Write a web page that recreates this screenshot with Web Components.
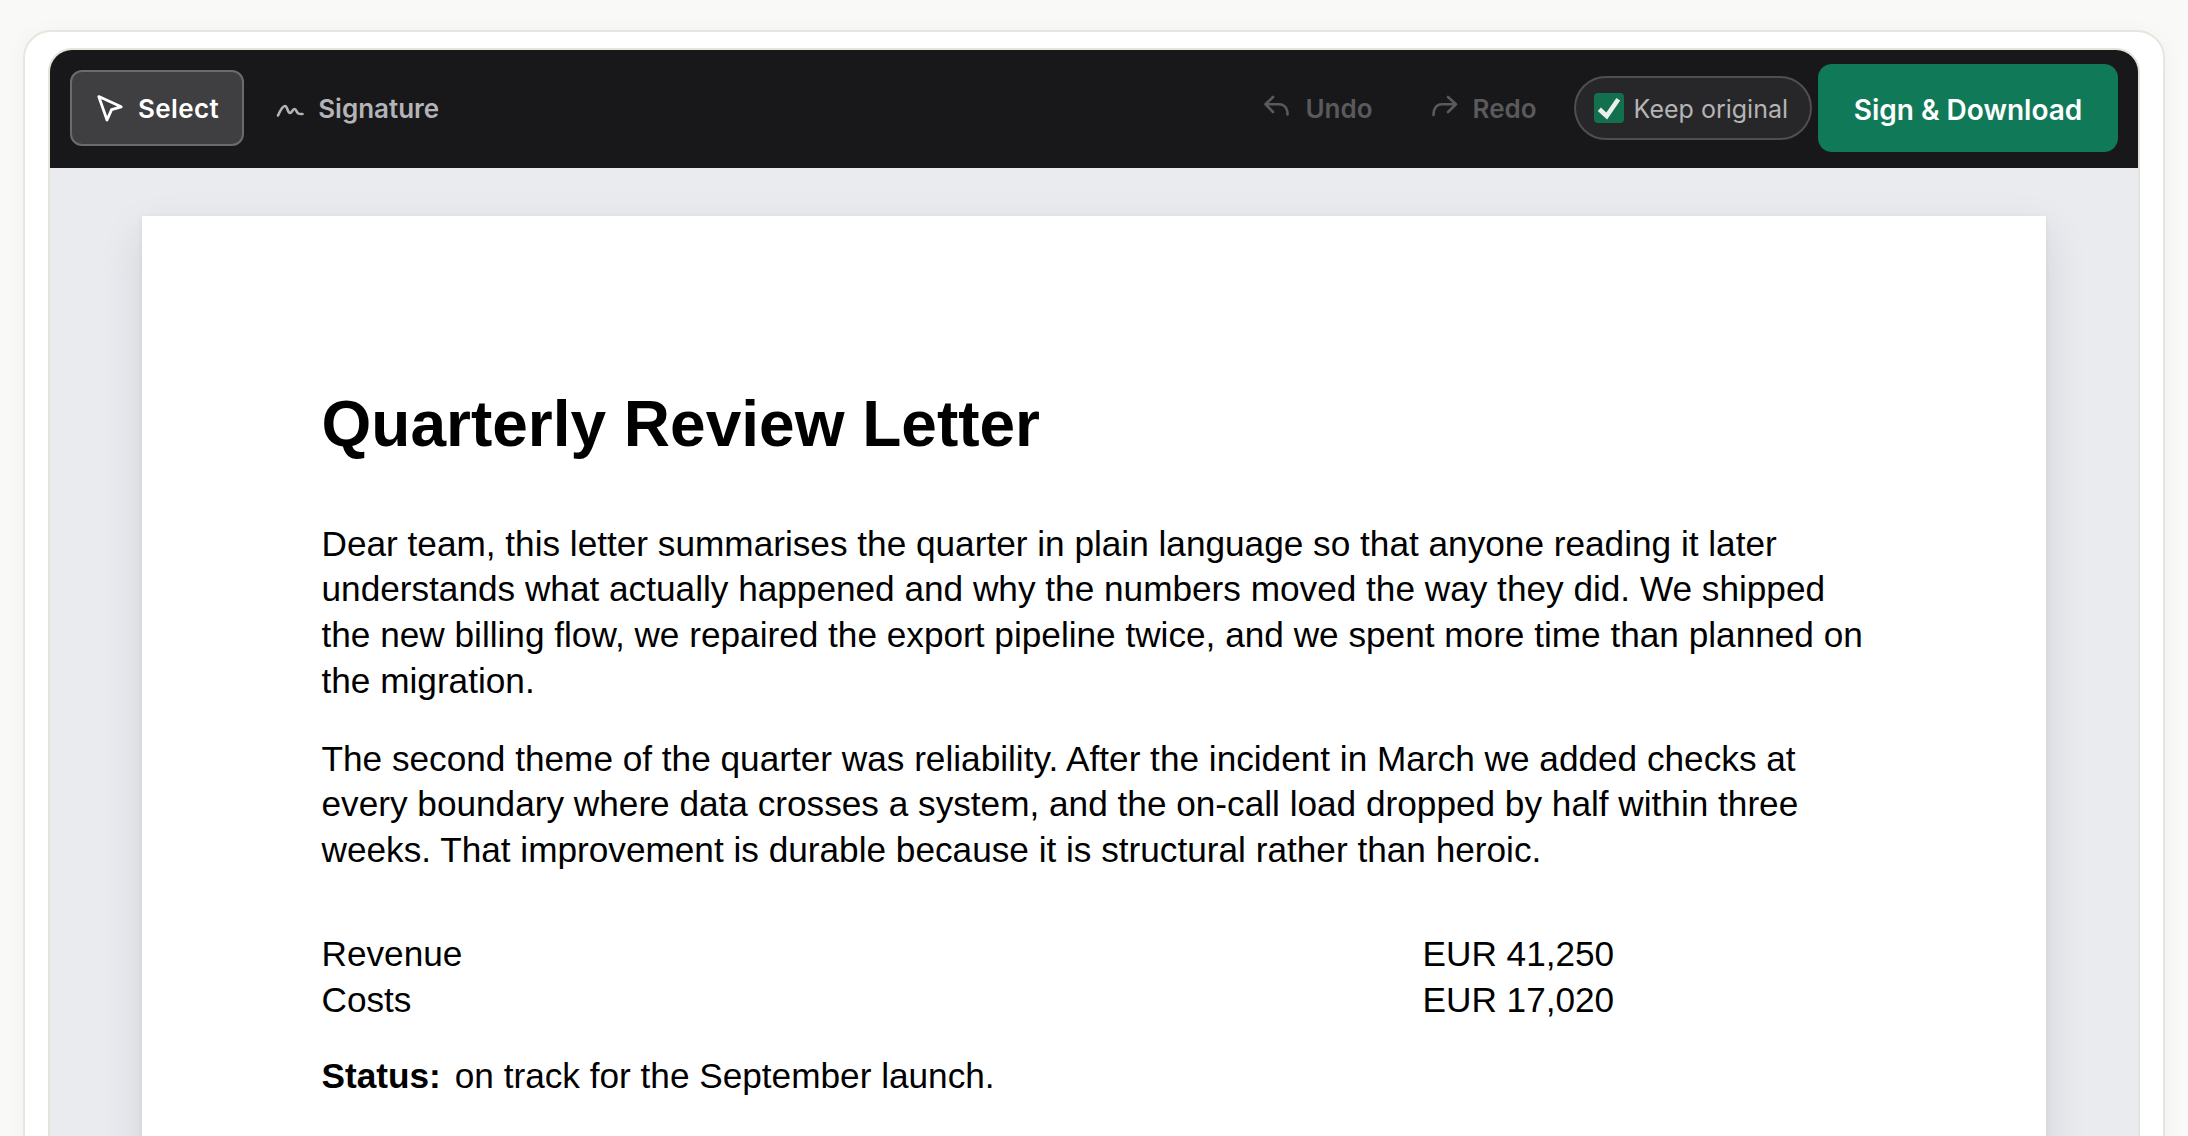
<!DOCTYPE html>
<html><head><meta charset="utf-8">
<style>
html,body{margin:0;padding:0;height:1136px;overflow:hidden;background:#f9f9f7}
</style></head><body>
<app-frame>
  <tool-bar>
    <tool-btn slot="left" active label="Select" icon="select"></tool-btn>
    <tool-btn slot="left" label="Signature" icon="sign"></tool-btn>
    <tool-btn slot="right" disabled label="Undo" icon="undo"></tool-btn>
    <tool-btn slot="right" disabled label="Redo" icon="redo"></tool-btn>
    <keep-toggle slot="right">Keep original</keep-toggle>
    <primary-btn slot="right">Sign &amp; Download</primary-btn>
  </tool-bar>
  <doc-canvas>
    <doc-page>
      <h1 slot="title">Quarterly Review Letter</h1>
      <doc-para>Dear team, this letter summarises the quarter in plain language so that anyone reading it later understands what actually happened and why the numbers moved the way they did. We shipped the new billing flow, we repaired the export pipeline twice, and we spent more time than planned on the migration.</doc-para>
      <doc-para>The second theme of the quarter was reliability. After the incident in March we added checks at every boundary where data crosses a system, and the on-call load dropped by half within three weeks. That improvement is durable because it is structural rather than heroic.</doc-para>
      <doc-table>
        <span>Revenue</span><span>EUR 41,250</span>
        <span>Costs</span><span>EUR 17,020</span>
      </doc-table>
      <doc-status label="Status:">on track for the September launch.</doc-status>
    </doc-page>
  </doc-canvas>
</app-frame>
<script>
const UI='"Inter","Liberation Sans",sans-serif';
const DOC='"Liberation Sans",Arial,sans-serif';
const ICONS={
 select:'<svg width="28" height="28" viewBox="0 0 28 28" fill="none" stroke="currentColor" stroke-width="2.8" stroke-linejoin="round"><path d="M1.8 2.6 L24.2 12.8 L14.6 15.6 L10 26 Z"/></svg>',
 sign:'<svg width="28" height="28" viewBox="0 0 28 28" fill="none" stroke="currentColor" stroke-width="2.6" stroke-linecap="round" stroke-linejoin="round"><path d="M2 21.5 C4 17 6.5 12 9 12 C11.5 12 11.5 19 14 19 C16 19 16.5 15 18.5 15 C20.5 15 20.5 19.5 23 19.8 L26.5 20"/></svg>',
 undo:'<svg width="28" height="28" viewBox="0 0 28 28" fill="none" stroke="currentColor" stroke-width="2.6" stroke-linecap="round" stroke-linejoin="round"><path d="M10 3 L2.5 10.3 L10 18 M3 10.3 H16 C21 10.3 24.5 14 24.5 20.5"/></svg>',
 redo:'<svg width="28" height="28" viewBox="0 0 28 28" fill="none" stroke="currentColor" stroke-width="2.6" stroke-linecap="round" stroke-linejoin="round"><path d="M17 3 L25 10.3 L17 18 M24.5 10.3 H11 C6 10.3 2.5 14 2.5 21"/></svg>'
};
function def(name,html,extra){
  customElements.define(name,class extends HTMLElement{
    constructor(){super();this.attachShadow({mode:'open'}).innerHTML=html;}
    connectedCallback(){extra&&extra.call(this);}
  });
}
def('app-frame',`<style>
:host{display:block;box-sizing:border-box;margin:30px 23px 0;width:2142px;height:1300px;padding:16px 23px 0;background:#fff;border:2px solid #e6e6df;border-radius:28px;box-shadow:0 4px 24px rgba(0,0,0,.04)}
.inner{box-sizing:border-box;height:100%;border:2px solid #e4e4dd;border-radius:24px 24px 0 0;overflow:hidden;background:#eaebef}
</style><div class="inner"><slot></slot></div>`);
def('tool-bar',`<style>
:host{display:flex;align-items:center;box-sizing:border-box;height:118px;padding:14px 20px 16px;background:#18181b}
.l,.r{display:flex;align-items:center;gap:6px}
.r{margin-left:auto}
</style><div class="l"><slot name="left"></slot></div><div class="r"><slot name="right"></slot></div>`);
def('tool-btn',`<style>
:host{display:inline-flex;align-items:center;gap:14px;box-sizing:border-box;height:76px;padding:0 24px;border:2px solid transparent;border-radius:12px;font:600 26px/1 ${UI};color:#b4b4b6;white-space:nowrap}
:host([active]){background:#3f3f42;border-color:#6b6b6e;color:#fff;letter-spacing:.4px;padding:0 23px 0 25px;gap:13px}
:host([disabled]){color:#5a5a5c}
svg{display:block}
#t{padding-top:2px}
</style><span id="i" style="display:flex"></span><span id="t"></span>`,function(){
  this.shadowRoot.getElementById('i').innerHTML=ICONS[this.getAttribute('icon')];
  this.shadowRoot.getElementById('t').textContent=this.getAttribute('label');
});
def('keep-toggle',`<style>
:host{display:inline-flex;align-items:center;gap:10px;box-sizing:border-box;height:64px;padding:0 22px 0 18px;margin-left:5px;border:2px solid #4f4f52;border-radius:32px;background:#27272a;font:400 25px/1 ${UI};color:#b4b4b6;white-space:nowrap}
.c{width:30px;height:30px;border-radius:4px;background:#13704f;display:block}
.t{padding-top:2px}
svg{display:block}
</style><span class="c"><svg width="30" height="30" viewBox="0 0 30 30" fill="none" stroke="#eee" stroke-width="4.6"><path d="M5.3 16.3 L12.7 23 L24.3 6.3"/></svg></span><span class="t"><slot></slot></span>`);
def('primary-btn',`<style>
:host{display:inline-flex;align-items:center;justify-content:center;box-sizing:border-box;height:88px;width:300px;padding-top:3px;border-radius:14px;background:#107a58;font:600 28px/1 ${UI};color:#fff;white-space:nowrap}
</style><slot></slot>`);
def('doc-canvas',`<style>
:host{display:block;padding:48px 92px 0}
</style><slot></slot>`);
def('doc-page',`<style>
:host{display:block;box-sizing:border-box;background:#fff;min-height:1200px;padding:170px 180px 0 179.5px;box-shadow:0 2px 6px rgba(30,35,60,.06),0 16px 40px rgba(30,35,60,.12);font:400 35.2px/45.76px ${DOC};color:#000}
::slotted(h1){margin:0 0 58.5px;font:700 64px/76px ${DOC};color:#000}
</style><slot name="title"></slot><slot></slot>`);
def('doc-para',`<style>
:host{display:block;margin:0 0 32px}
</style><slot></slot>`);
def('doc-table',`<style>
:host{display:grid;grid-template-columns:1101px 1fr;margin:58px 0 31px}
</style><slot></slot>`);
def('doc-status',`<style>
:host{display:flex;gap:14px}
b{font-weight:700}
</style><b id="l"></b><span><slot></slot></span>`,function(){this.shadowRoot.getElementById('l').textContent=this.getAttribute('label');});
</script>
</body></html>
